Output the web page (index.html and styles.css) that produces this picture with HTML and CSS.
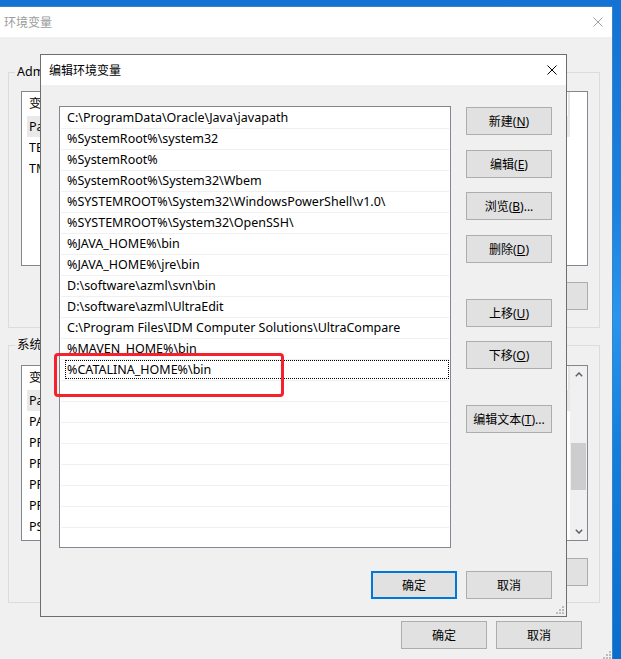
FILE: index.html
```html
<!DOCTYPE html>
<html lang="zh-CN">
<head>
<meta charset="utf-8">
<title>编辑环境变量</title>
<link rel="stylesheet" href="styles.css">
</head>
<body>
<div class="desktop">
  <div class="parent">
    <div class="titlebar parent-title">
      <span>环境变量</span>
      <svg class="close" viewBox="0 0 10 10"><path d="M0.5 0.5L9.5 9.5M9.5 0.5L0.5 9.5" stroke="#a0a0a0" stroke-width="1" fill="none"/></svg>
    </div>
    <div class="parent-body">
      <div class="group g-user">
        <div class="group-label">Administrator 的用户变量(<u>U</u>)</div>
        <div class="plist">
          <div class="plist-body">
            <div class="phead"><span class="c1">变量</span><span class="c2">值</span></div>
            <div class="prow sel"><span class="c1">Path</span><span class="c2">C:\Users\Administrator\AppData\Local\Microsoft\WindowsApps;</span></div>
            <div class="prow"><span class="c1">TEMP</span><span class="c2">%USERPROFILE%\AppData\Local\Temp</span></div>
            <div class="prow"><span class="c1">TMP</span><span class="c2">%USERPROFILE%\AppData\Local\Temp</span></div>
          </div>
        </div>
        <div class="btn-row">
          <button class="btn">新建(<u>N</u>)...</button>
          <button class="btn">编辑(<u>E</u>)...</button>
          <button class="btn">删除(<u>D</u>)</button>
        </div>
      </div>
      <div class="group g-sys">
        <div class="group-label">系统变量(<u>S</u>)</div>
        <div class="plist">
          <div class="plist-body">
            <div class="phead"><span class="c1">变量</span><span class="c2">值</span></div>
            <div class="prow sel"><span class="c1">Path</span><span class="c2">C:\ProgramData\Oracle\Java\javapath;%SystemRoot%\system32;</span></div>
            <div class="prow"><span class="c1">PATHEXT</span><span class="c2">.COM;.EXE;.BAT;.CMD;.VBS;.VBE;.JS;.JSE;.WSF;.WSH;.MSC</span></div>
            <div class="prow"><span class="c1">PROCESSOR_ARCHITECTURE</span><span class="c2">AMD64</span></div>
            <div class="prow"><span class="c1">PROCESSOR_IDENTIFIER</span><span class="c2">Intel64 Family 6 Model 158 Stepping 10, GenuineIntel</span></div>
            <div class="prow"><span class="c1">PROCESSOR_LEVEL</span><span class="c2">6</span></div>
            <div class="prow"><span class="c1">PROCESSOR_REVISION</span><span class="c2">9e0a</span></div>
            <div class="prow"><span class="c1">PSModulePath</span><span class="c2">%ProgramFiles%\WindowsPowerShell\Modules;</span></div>
          </div>
          <div class="vscroll">
            <div class="sb-arrow"><svg class="chev" viewBox="0 0 8 5"><path d="M0.8 4.2L4 1L7.2 4.2" stroke="#606060" stroke-width="1.5" fill="none"/></svg></div>
            <div class="sb-track"><div class="sb-thumb"></div></div>
            <div class="sb-arrow"><svg class="chev" viewBox="0 0 8 5"><path d="M0.8 0.8L4 4L7.2 0.8" stroke="#606060" stroke-width="1.5" fill="none"/></svg></div>
          </div>
        </div>
        <div class="btn-row">
          <button class="btn">新建(<u>W</u>)...</button>
          <button class="btn">编辑(<u>I</u>)...</button>
          <button class="btn">删除(<u>L</u>)</button>
        </div>
      </div>
      <div class="parent-footer">
        <button class="btn">确定</button>
        <button class="btn">取消</button>
      </div>
    </div>
    <svg class="grip grip-parent" viewBox="0 0 8 8"><g fill="#bcbcbc"><rect x="6" y="0" width="2" height="2"/><rect x="3" y="3" width="2" height="2"/><rect x="6" y="3" width="2" height="2"/><rect x="0" y="6" width="2" height="2"/><rect x="3" y="6" width="2" height="2"/><rect x="6" y="6" width="2" height="2"/></g></svg>
  </div>

  <div class="dialog">
    <div class="titlebar dialog-title">
      <span>编辑环境变量</span>
      <svg class="close" viewBox="0 0 10 10"><path d="M0.5 0.5L9.5 9.5M9.5 0.5L0.5 9.5" stroke="#000" stroke-width="1" fill="none"/></svg>
    </div>
    <div class="dialog-body">
      <div class="dmain">
        <div class="dlist">
          <div class="drow">C:\ProgramData\Oracle\Java\javapath</div>
          <div class="drow">%SystemRoot%\system32</div>
          <div class="drow">%SystemRoot%</div>
          <div class="drow">%SystemRoot%\System32\Wbem</div>
          <div class="drow">%SYSTEMROOT%\System32\WindowsPowerShell\v1.0\</div>
          <div class="drow">%SYSTEMROOT%\System32\OpenSSH\</div>
          <div class="drow">%JAVA_HOME%\bin</div>
          <div class="drow">%JAVA_HOME%\jre\bin</div>
          <div class="drow">D:\software\azml\svn\bin</div>
          <div class="drow">D:\software\azml\UltraEdit</div>
          <div class="drow">C:\Program Files\IDM Computer Solutions\UltraCompare</div>
          <div class="drow">%MAVEN_HOME%\bin</div>
          <div class="drow editing"><div class="focus-box">%CATALINA_HOME%\bin</div></div>
          <div class="drow"></div>
          <div class="drow"></div>
          <div class="drow"></div>
          <div class="drow"></div>
          <div class="drow"></div>
          <div class="drow"></div>
          <div class="drow"></div>
          <div class="drow"></div>
        </div>
        <div class="btn-col">
          <button class="btn">新建(<u>N</u>)</button>
          <button class="btn nudge">编辑(<u>E</u>)</button>
          <button class="btn">浏览(<u>B</u>)...</button>
          <button class="btn nudge">删除(<u>D</u>)</button>
          <button class="btn wide">上移(<u>U</u>)</button>
          <button class="btn">下移(<u>O</u>)</button>
          <button class="btn wide">编辑文本(<u>T</u>)...</button>
        </div>
      </div>
      <div class="dfooter">
        <button class="btn focus">确定</button>
        <button class="btn">取消</button>
      </div>
    </div>
    <svg class="grip grip-dialog" viewBox="0 0 8 8"><g fill="#bcbcbc"><rect x="6" y="0" width="2" height="2"/><rect x="3" y="3" width="2" height="2"/><rect x="6" y="3" width="2" height="2"/><rect x="0" y="6" width="2" height="2"/><rect x="3" y="6" width="2" height="2"/><rect x="6" y="6" width="2" height="2"/></g></svg>
  </div>

  <div class="annot"></div>
</div>
</body>
</html>
```

FILE: styles.css
```css
* { box-sizing: border-box; }
html, body { margin: 0; padding: 0; }
body {
  width: 621px;
  height: 659px;
  overflow: hidden;
  font-family: "Noto Sans", "Noto Sans CJK SC", sans-serif;
  font-size: 12px;
  color: #000;
  background: linear-gradient(180deg, #1372d3 0%, #1a80de 30%, #2896ee 48%, #127fdd 68%, #0a6dcd 100%);
}
.desktop {
  position: relative;
  width: 621px;
  height: 659px;
  display: flex;
  align-items: flex-start;
}

/* parent window */
.parent {
  position: relative;
  margin-top: 6px;
  width: 613px;
  height: 653px;
  background: #f0f0f0;
  border-top: 1px solid #3b82c8;
  border-right: 1px solid #3b82c8;
}
.titlebar {
  height: 30px;
  background: #fff;
  display: flex;
  align-items: center;
  justify-content: space-between;
}
.parent-title { padding: 0 9px 0 4px; color: #9c9c9c; }
.close { width: 10px; height: 10px; display: block; }
.parent-body { padding: 35px 12px 0 8px; }
.group { border: 1px solid #dcdcdc; }
.g-user { padding: 0 11px 17px 12px; }
.g-sys { margin-top: 17px; padding: 0 11px 16px 12px; }
.group-label {
  width: max-content;
  margin: -9px 0 0 -6px;
  padding: 0 2px;
  height: 16px;
  line-height: 16px;
  background: #f0f0f0;
  font-size: 12.5px;
}
.plist {
  display: flex;
  border: 1px solid #828790;
  background: #fff;
  overflow: hidden;
}
.g-user .plist { margin-top: 11px; height: 175px; }
.g-sys .plist { margin-top: 12px; height: 176px; }
.plist-body { flex: 1; min-width: 0; overflow: hidden; }
.phead, .prow {
  display: flex;
  margin: 0 17px 0 5px;
  padding-left: 2px;
  font-size: 12.5px;
  white-space: nowrap;
  overflow: hidden;
}
.g-sys .phead, .g-sys .prow { margin-right: 0; }
.phead { height: 24px; line-height: 24px; border-right: 2px solid #e5e5e5; }
.prow { height: 21px; line-height: 21px; }
.prow.sel { background: #e9e9e9; }
.c1 { flex: none; width: 190px; overflow: hidden; }
.c2 { flex: none; width: 300px; overflow: hidden; }

.vscroll {
  flex: none;
  width: 17px;
  background: #f0f0f0;
  display: flex;
  flex-direction: column;
}
.sb-arrow { height: 17px; display: flex; align-items: center; justify-content: center; }
.chev { width: 8px; height: 5px; display: block; }
.sb-track { flex: 1; }
.sb-thumb { margin: 60px 1px 0 1px; height: 47px; background: #cdcdcd; }

.btn {
  width: 86px;
  height: 28px;
  padding: 0;
  border: 1px solid #adadad;
  background: #e1e1e1;
  font-family: inherit;
  font-size: 12px;
  color: #000;
  display: flex;
  align-items: center;
  justify-content: center;
  white-space: nowrap;
}
.btn.focus { border: 2px solid #0078d7; }
.btn-row { display: flex; justify-content: flex-end; gap: 9px; }
.g-user .btn-row { margin-top: 16px; }
.g-sys .btn-row { margin-top: 17px; }
.parent-footer {
  margin: 18px 18px 0 0;
  display: flex;
  justify-content: flex-end;
  gap: 9px;
}

.grip { position: absolute; width: 8px; height: 8px; display: block; }
.grip-parent { right: 1px; bottom: 0; }
.grip-dialog { right: 2px; bottom: 2px; }

/* dialog window */
.dialog {
  position: absolute;
  left: 40px;
  top: 54px;
  width: 527px;
  height: 563px;
  background: #f0f0f0;
  border: 1px solid #6e6e6e;
}
.dialog-title { padding: 0 9px 0 8px; }
.dialog-body { padding: 21px 14px 17px 18px; }
.dmain { display: flex; align-items: flex-start; gap: 15px; }
.dlist {
  flex: none;
  width: 392px;
  height: 442px;
  padding-top: 1px;
  border: 1px solid #828790;
  background: #fff;
  overflow: hidden;
}
.drow {
  height: 21px;
  margin: 0 1px;
  padding-left: 6px;
  border-bottom: 1px solid #f0f0f0;
  line-height: 20px;
  font-size: 12.5px;
  white-space: nowrap;
  overflow: hidden;
}
.drow.editing { padding-left: 4px; }
.focus-box {
  height: 19px;
  border: 1px dotted #000;
  padding-left: 1px;
  line-height: 17px;
}
.btn-col { display: flex; flex-direction: column; gap: 14px; margin-top: 1px; }
.btn-col .nudge { margin-top: 1px; }
.btn-col .wide { margin-top: 22px; }
.dfooter {
  margin-top: 23px;
  display: flex;
  justify-content: flex-end;
  gap: 9px;
}

/* red annotation */
.annot {
  position: absolute;
  left: 54px;
  top: 353px;
  width: 230px;
  height: 44px;
  border: 3px solid #f5222d;
  border-radius: 4px;
}
```
